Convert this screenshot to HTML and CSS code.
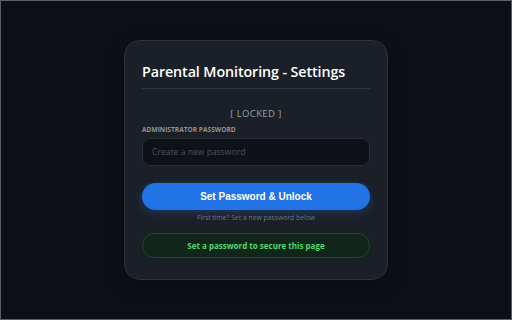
FILE: index.html
```html
<!DOCTYPE html>
<html>
<head>
<meta charset="utf-8">
<link rel="stylesheet" href="styles.css">
</head>
<body>
<div class="page">
  <div class="card">
    <h1 class="title">Parental Monitoring - Settings</h1>
    <div class="status">[ LOCKED ]</div>
    <label class="label">Administrator Password</label>
    <input class="input" type="password" placeholder="Create a new password">
    <button class="btn">Set Password &amp; Unlock</button>
    <div class="hint">First time? Set a new password below</div>
    <div class="notice">Set a password to secure this page</div>
  </div>
</div>
</body>
</html>
```
FILE: styles.css
```css
html, body {
  margin: 0;
  padding: 0;
  height: 100%;
}
body {
  background: #0d1117;
  font-family: "Open Sans", "Noto Sans", sans-serif;
}
.page {
  box-sizing: border-box;
  height: 320px;
  border: 1px solid #5a5d63;
  display: flex;
  align-items: center;
  justify-content: center;
}
.card {
  box-sizing: border-box;
  width: 264px;
  height: 240px;
  background: #1b1f27;
  border: 1px solid #2c313a;
  border-radius: 16px;
  padding: 21px 17px 0;
  display: flex;
  flex-direction: column;
  box-shadow: 0 6px 20px rgba(0,0,0,0.4);
}
.title {
  margin: 0;
  font-size: 14.3px;
  font-weight: 600;
  color: #ffffff;
  line-height: 20px;
  padding-bottom: 6px;
  border-bottom: 1px solid #30363d;
  letter-spacing: -0.1px;
}
.status {
  margin-top: 19px;
  text-align: center;
  font-size: 9.5px;
  color: #9aa1a9;
  letter-spacing: 0.4px;
  line-height: 12px;
}
.label {
  margin-top: 5px;
  font-size: 6.6px;
  font-weight: 700;
  color: #8b929a;
  text-transform: uppercase;
  line-height: 10px;
}
.input {
  margin-top: 3px;
  box-sizing: border-box;
  height: 28px;
  width: 100%;
  background: #0e1117;
  border: 1px solid #2a2f37;
  border-radius: 8px;
  padding: 0 9px;
  font-family: "Open Sans", sans-serif;
  font-size: 8.6px;
  color: #c9d1d9;
  outline: none;
}
.input::placeholder {
  color: #4b5159;
}
.btn {
  margin-top: 17px;
  height: 27px;
  width: 100%;
  border: none;
  border-radius: 14px;
  background: #2274e6;
  color: #ffffff;
  font-family: "Liberation Sans", Arial, sans-serif;
  font-weight: 700;
  font-size: 10px;
  box-shadow: 0 2px 10px rgba(34,116,230,0.35);
}
.hint {
  margin-top: 3px;
  text-align: center;
  font-size: 6.8px;
  color: #6e757e;
  line-height: 10px;
}
.notice {
  margin-top: 10px;
  box-sizing: border-box;
  height: 25px;
  display: flex;
  align-items: center;
  justify-content: center;
  background: #10261a;
  border: 1px solid #1f4a2b;
  border-radius: 13px;
  color: #4fd872;
  font-size: 8px;
  font-weight: 700;
}
```
